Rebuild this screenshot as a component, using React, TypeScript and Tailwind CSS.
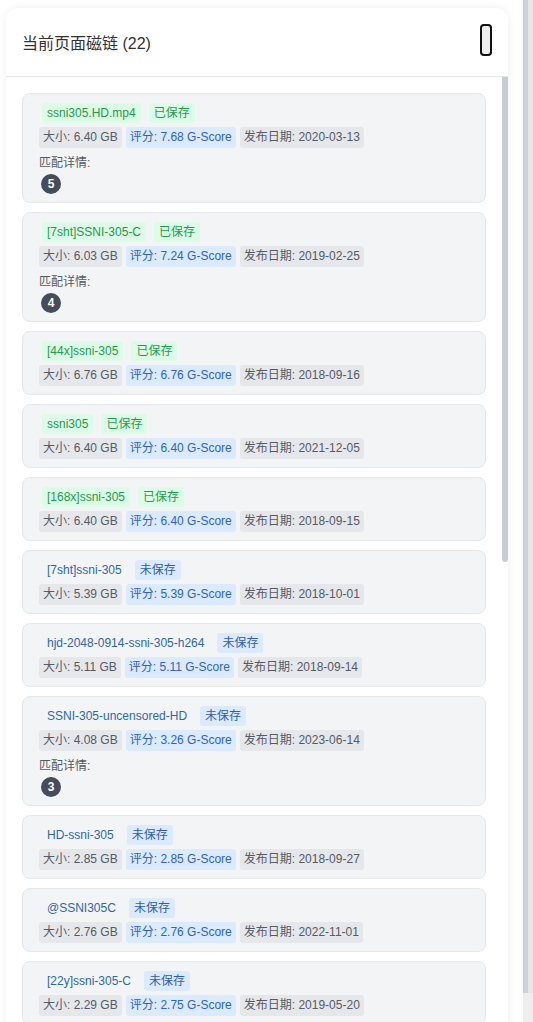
import React from "react";

type Magnet = {
  name: string;
  saved: boolean;
  size: string;
  score: string;
  date: string;
  match?: number;
};

const magnets: Magnet[] = [
  { name: "ssni305.HD.mp4", saved: true, size: "6.40 GB", score: "7.68", date: "2020-03-13", match: 5 },
  { name: "[7sht]SSNI-305-C", saved: true, size: "6.03 GB", score: "7.24", date: "2019-02-25", match: 4 },
  { name: "[44x]ssni-305", saved: true, size: "6.76 GB", score: "6.76", date: "2018-09-16" },
  { name: "ssni305", saved: true, size: "6.40 GB", score: "6.40", date: "2021-12-05" },
  { name: "[168x]ssni-305", saved: true, size: "6.40 GB", score: "6.40", date: "2018-09-15" },
  { name: "[7sht]ssni-305", saved: false, size: "5.39 GB", score: "5.39", date: "2018-10-01" },
  { name: "hjd-2048-0914-ssni-305-h264", saved: false, size: "5.11 GB", score: "5.11", date: "2018-09-14" },
  { name: "SSNI-305-uncensored-HD", saved: false, size: "4.08 GB", score: "3.26", date: "2023-06-14", match: 3 },
  { name: "HD-ssni-305", saved: false, size: "2.85 GB", score: "2.85", date: "2018-09-27" },
  { name: "@SSNI305C", saved: false, size: "2.76 GB", score: "2.76", date: "2022-11-01" },
  { name: "[22y]ssni-305-C", saved: false, size: "2.29 GB", score: "2.75", date: "2019-05-20" },
];

const TOTAL = 22;

const MagnetCard = ({ m }: { m: Magnet }) => {
  return (
    <div className="shrink-0 rounded-lg border border-[#e5e7eb] bg-[#f3f4f6] pl-4 pr-4 pt-[9px] pb-2">
      {/* name + saved status */}
      <div className="flex items-center gap-2 text-xs leading-[20px]">
        <span
          className={
            m.saved
              ? "ml-[3px] h-[20px] rounded-[3px] bg-[#dcfce7] px-[5px] text-[#1f9d4c]"
              : "ml-[3px] h-[20px] px-[5px] text-[#2f67ad]"
          }
        >
          {m.name}
        </span>
        <span
          className={
            m.saved
              ? "h-[20px] rounded-[3px] bg-[#dcfce7] px-[5px] text-[#1f9d4c]"
              : "h-[20px] rounded-[3px] bg-[#dbeafe] px-[5px] text-[#2f5db5]"
          }
        >
          {m.saved ? "已保存" : "未保存"}
        </span>
      </div>

      {/* meta tags */}
      <div className="mt-1 flex flex-wrap gap-1 text-xs leading-[21px]">
        <span className="h-[21px] rounded-[3px] bg-[#e5e7eb] px-1 text-[#555b64]">大小: {m.size}</span>
        <span className="h-[21px] rounded-[3px] bg-[#dbeafe] px-1 text-[#2f63c9]">评分: {m.score} G-Score</span>
        <span className="h-[21px] rounded-[3px] bg-[#e5e7eb] px-1 text-[#555b64]">发布日期: {m.date}</span>
      </div>

      {/* match details */}
      {m.match !== undefined && (
        <div className="mt-[6px]">
          <div className="text-xs leading-[18px] text-[#555b64]">匹配详情:</div>
          <div className="mt-[2px] ml-[2px] flex h-[20px] w-[20px] items-center justify-center rounded-full bg-[#454d5a] text-xs font-bold text-white">
            {m.match}
          </div>
        </div>
      )}
    </div>
  );
};

export default function App() {
  return (
    <div className="flex h-[1022px] overflow-hidden bg-white font-['Liberation_Sans','Noto_Sans_CJK_SC',sans-serif]">
      <div className="flex-1 pl-[6px] pr-[15px] pt-2">
        <div className="flex h-[1036px] flex-col rounded-xl bg-white shadow-[0_0_8px_rgba(0,0,0,0.07)]">
          {/* Header */}
          <div className="flex h-[69px] shrink-0 items-center justify-between border-b border-[#e5e7eb] px-4">
            <h2 className="pt-[3px] text-base font-normal text-[#333]">当前页面磁链 ({TOTAL})</h2>
            <button className="mb-[5px] h-[32px] w-[12px] rounded-[4px] border-2 border-[#111] bg-[#efefef]" aria-label="close" />
          </div>

          {/* List with its scrollbar */}
          <div className="flex min-h-0 flex-1">
            <div className="flex flex-1 flex-col gap-[9px] overflow-hidden p-4">
              {magnets.map((m, i) => (
                <MagnetCard key={i} m={m} />
              ))}
            </div>
            <div className="w-[6px] shrink-0">
              <div className="h-[485px] w-[6px] rounded-b-full bg-[#c9ccd3]" />
            </div>
          </div>
        </div>
      </div>

      {/* page scrollbar */}
      <div className="flex h-full w-[10px] shrink-0 flex-col bg-[#eeeeef]">
        <div className="flex h-[993px] w-full">
          <div className="h-full w-[5px] bg-[#cfd2d8]" />
          <div className="h-full w-[5px] bg-[#e6e7ea]" />
        </div>
      </div>
    </div>
  );
}
